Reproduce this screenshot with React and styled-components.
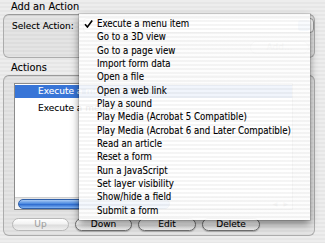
import React from 'react';
import styled, { createGlobalStyle } from 'styled-components';

const GlobalStyle = createGlobalStyle`
  html, body {
    margin: 0;
    padding: 0;
    background: #e8e8e8;
  }
  * {
    box-sizing: border-box;
  }
`;

const pinstripe = `repeating-linear-gradient(
  to bottom,
  #ededed 0px,
  #ededed 2px,
  #e6e6e6 2px,
  #e6e6e6 4px
)`;

const StyledWindow = styled.div`
  position: relative;
  width: 325px;
  height: 243px;
  overflow: hidden;
  padding: 1px 10px 0 3px;
  background: ${pinstripe};
  font-family: 'DejaVu Sans', 'Liberation Sans', sans-serif;
  font-size: 9px;
  color: #000;
  -webkit-text-stroke: 0.1px currentColor;
`;

const StyledGroupTitle = styled.div`
  height: 13px;
  line-height: 12px;
  margin-top: ${(props) => props.top || 0}px;
  padding-left: 8px;
  font-size: 9.8px;
`;

const StyledGroupBox = styled.div`
  height: ${(props) => props.height}px;
  border: 1px solid #acacac;
  border-top-color: #9a9a9a;
  border-radius: 6px;
  background: rgba(0, 0, 0, 0.035);
  box-shadow: inset 0 1px 0 rgba(0, 0, 0, 0.06);
`;

const StyledSelectRow = styled.div`
  display: flex;
  align-items: center;
  height: 17px;
  margin-top: 2px;
  padding-left: 8px;
  gap: 9px;
`;

const StyledPopup = styled.div`
  width: 231px;
  height: 15px;
  border: 1px solid #999;
  border-radius: 4px;
  background: #fff;
  display: flex;
  justify-content: flex-end;
  align-items: center;
  padding-right: 3px;
`;

const StyledPopupArrows = styled.div`
  width: 12px;
  height: 11px;
  border-radius: 3px;
  background: linear-gradient(#b9d3f5, #7aa7e6);
`;

const StyledAddRow = styled.div`
  display: flex;
  justify-content: flex-end;
  padding: 7px 5px 0 0;
`;

const StyledButton = styled.div`
  width: ${(props) => props.width || 57}px;
  height: 13px;
  line-height: 11px;
  text-align: center;
  border: 1px solid ${(props) => (props.disabled ? '#b8b8b8' : '#6e6e6e')};
  border-radius: 7px;
  background: linear-gradient(#ffffff 0%, #f2f2f2 45%, #dcdcdc 55%, #efefef 100%);
  color: ${(props) => (props.disabled ? '#a0a0a0' : '#000')};
  box-shadow: ${(props) => (props.disabled ? 'none' : '0 1px 1px rgba(0,0,0,0.25)')};
`;

const StyledListBox = styled.div`
  width: 279px;
  height: 127px;
  margin: 7px 0 0 10px;
  border: 1px solid #8c8c8c;
  background: #fff;
  display: flex;
  flex-direction: column;
`;

const StyledRows = styled.div`
  flex: 1;
  display: flex;
  flex-direction: column;
  gap: 4px;
  padding-top: 1px;
`;

const StyledRow = styled.div`
  height: 13px;
  line-height: 13px;
  padding-left: 23px;
  background: ${(props) => (props.selected ? '#3875d7' : 'transparent')};
  color: ${(props) => (props.selected ? '#fff' : '#000')};
  white-space: nowrap;
`;

const StyledScrollbar = styled.div`
  height: 12px;
  display: flex;
  align-items: center;
  padding: 0 4px 0 3px;
  border-top: 1px solid #d0d0d0;
  background: linear-gradient(#e4e4e4, #f8f8f8);
`;

const StyledThumb = styled.div`
  width: 152px;
  height: 10px;
  border-radius: 5px;
  border: 1px solid #2f5fa8;
  background: linear-gradient(#a9cbf5 0%, #4f8be0 45%, #2f6dd0 55%, #7fb3f4 100%);
`;

const StyledArrows = styled.div`
  margin-left: auto;
  display: flex;
  gap: 6px;
  color: #888;
  font-size: 6px;
`;

const StyledButtonRow = styled.div`
  display: flex;
  gap: 6px;
  padding: 8px 0 0 8px;
`;

const StyledMenu = styled.div`
  position: absolute;
  left: 79px;
  top: 14px;
  width: 231px;
  height: 206px;
  padding: 3px 0;
  background: repeating-linear-gradient(
    to bottom,
    rgba(255, 255, 255, 0.93) 0px,
    rgba(255, 255, 255, 0.93) 2px,
    rgba(244, 244, 244, 0.93) 2px,
    rgba(244, 244, 244, 0.93) 4px
  );
  box-shadow: 0 4px 8px rgba(0, 0, 0, 0.45), 0 0 0 1px rgba(0, 0, 0, 0.12);
`;

const StyledMenuItem = styled.div`
  position: relative;
  height: 13.33px;
  line-height: 13.33px;
  padding-left: 18px;
  font-family: 'DejaVu Sans Condensed', 'DejaVu Sans', sans-serif;
  font-size: 9.6px;
  white-space: nowrap;
`;

const StyledCheck = styled.svg`
  position: absolute;
  left: 5px;
  top: 3px;
  width: 9px;
  height: 8px;
`;

const menuItems = [
  'Execute a menu item',
  'Go to a 3D view',
  'Go to a page view',
  'Import form data',
  'Open a file',
  'Open a web link',
  'Play a sound',
  'Play Media (Acrobat 5 Compatible)',
  'Play Media (Acrobat 6 and Later Compatible)',
  'Read an article',
  'Reset a form',
  'Run a JavaScript',
  'Set layer visibility',
  'Show/hide a field',
  'Submit a form',
];

const App = () => {
  return (
    <StyledWindow>
      <GlobalStyle />
      <StyledGroupTitle>Add an Action</StyledGroupTitle>
      <StyledGroupBox height={44}>
        <StyledSelectRow>
          <span>Select Action:</span>
          <StyledPopup>
            <StyledPopupArrows />
          </StyledPopup>
        </StyledSelectRow>
        <StyledAddRow>
          <StyledButton width={59} disabled>
            Add...
          </StyledButton>
        </StyledAddRow>
      </StyledGroupBox>
      <StyledGroupTitle top={4}>Actions</StyledGroupTitle>
      <StyledGroupBox height={161}>
        <StyledListBox>
          <StyledRows>
            <StyledRow selected>Execute a menu item</StyledRow>
            <StyledRow>Execute a menu item</StyledRow>
          </StyledRows>
          <StyledScrollbar>
            <StyledThumb />
            <StyledArrows>
              <span>◀</span>
              <span>▶</span>
            </StyledArrows>
          </StyledScrollbar>
        </StyledListBox>
        <StyledButtonRow>
          <StyledButton disabled>Up</StyledButton>
          <StyledButton>Down</StyledButton>
          <StyledButton width={58}>Edit</StyledButton>
          <StyledButton width={58}>Delete</StyledButton>
        </StyledButtonRow>
      </StyledGroupBox>
      <StyledMenu>
        {menuItems.map((item, i) => (
          <StyledMenuItem key={item}>
            {i === 0 && (
              <StyledCheck viewBox="0 0 9 8">
                <path d="M1 4.2 L3.4 7 L8.2 0.6" fill="none" stroke="#000" strokeWidth="1.6" />
              </StyledCheck>
            )}
            {item}
          </StyledMenuItem>
        ))}
      </StyledMenu>
    </StyledWindow>
  );
};

export default App;
